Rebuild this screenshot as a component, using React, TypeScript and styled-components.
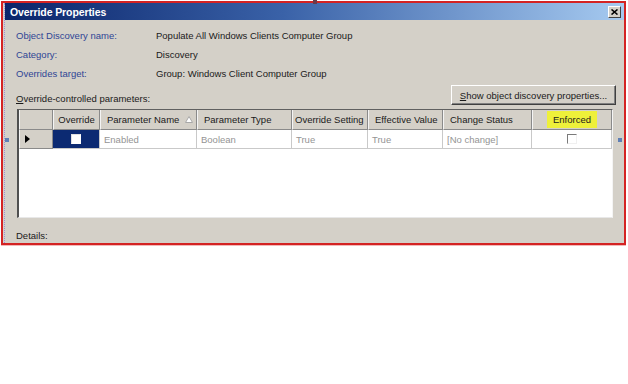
import React from "react";
import styled, { createGlobalStyle } from "styled-components";

const Global = createGlobalStyle`
  html, body { margin: 0; padding: 0; background: #ffffff; }
  body { font-family: "Liberation Sans", Arial, sans-serif; font-size: 9.5px; color: #1a1a1a; }
`;

const COLS = "34px 47px 97px 95px 76px 75px 89px 80px";

const Page = styled.div`
  padding: 1px 0 0 1px;
  width: 628px;
  height: 384px;
  box-sizing: border-box;
`;

const Frame = styled.div`
  position: relative;
  width: 625px;
  height: 244px;
  box-sizing: border-box;
  border: 2px solid #d42323;
  box-shadow: 0 1px 0 #f3b9b9;
  background: #d4d0c8;
  display: flex;
`;

const Handle = styled.span<{ $x: number; $y: number; $dark?: boolean }>`
  position: absolute;
  left: ${(p) => p.$x}px;
  top: ${(p) => p.$y}px;
  width: 4px;
  height: 4px;
  background: ${(p) => (p.$dark ? "#6a3a4a" : "#5f7fb5")};
`;

const Window = styled.div`
  flex: 1;
  margin-left: 1px;
  border-left: 1px dotted #9a8fd6;
  display: flex;
  flex-direction: column;
  min-width: 0;
`;

const TitleBar = styled.div`
  height: 17px;
  display: flex;
  align-items: center;
  justify-content: space-between;
  padding: 0 3px 0 5px;
  background: linear-gradient(90deg, #0a246a 0%, #3a62a8 45%, #a6caf0 100%);
`;

const Title = styled.span`
  color: #ffffff;
  font-weight: bold;
  font-size: 10.5px;
  letter-spacing: -0.1px;
`;

const CloseButton = styled.span`
  width: 13px;
  height: 12px;
  box-sizing: border-box;
  background: #d4d0c8;
  border-top: 1px solid #ffffff;
  border-left: 1px solid #ffffff;
  border-right: 1px solid #404040;
  border-bottom: 1px solid #404040;
  display: flex;
  align-items: center;
  justify-content: center;
`;

const Body = styled.div`
  flex: 1;
  display: flex;
  flex-direction: column;
  padding: 6px 8px 0 11px;
`;

const InfoGrid = styled.div`
  display: grid;
  grid-template-columns: 140px 1fr;
  grid-auto-rows: 19px;
  align-items: center;
`;

const Label = styled.span`
  color: #2f4595;
`;

const Value = styled.span`
  color: #1a1a1a;
`;

const ParamBar = styled.div`
  margin-top: 2px;
  height: 20px;
  display: flex;
  align-items: flex-end;
  justify-content: space-between;
`;

const SectionLabel = styled.span`
  line-height: 12px;
  color: #1a1a1a;
`;

const Button = styled.button`
  width: 165px;
  height: 20px;
  box-sizing: border-box;
  font-family: inherit;
  font-size: 9.5px;
  color: #1a1a1a;
  background: #d4d0c8;
  border-top: 1px solid #ffffff;
  border-left: 1px solid #ffffff;
  border-right: 1px solid #404040;
  border-bottom: 1px solid #404040;
  box-shadow: inset -1px -1px 0 #808080;
  padding: 0;
`;

const GridBox = styled.div`
  margin: 4px 0 0 1px;
  width: 596px;
  height: 109px;
  box-sizing: border-box;
  background: #ffffff;
  border-left: 2px solid #505050;
  border-top: 1px solid #606060;
  border-right: 1px solid #f4f4f4;
  border-bottom: 1px solid #e8e8e8;
  display: flex;
  flex-direction: column;
`;

const Row = styled.div<{ $h: number }>`
  display: grid;
  grid-template-columns: ${COLS};
  height: ${(p) => p.$h}px;
`;

const HeaderCell = styled.div<{ $center?: boolean; $pad?: number }>`
  box-sizing: border-box;
  background: #d4d0c8;
  border-left: 1px solid #f4f4f4;
  border-right: 1px solid #8a8a8a;
  border-bottom: 1px solid #8a8a8a;
  display: flex;
  align-items: center;
  justify-content: ${(p) => (p.$center ? "center" : "space-between")};
  padding: 0 ${(p) => (p.$center ? 0 : 3)}px 0 ${(p) => (p.$center ? 0 : p.$pad ?? 6)}px;
  color: #1a1a1a;
  white-space: nowrap;
  overflow: hidden;
`;

const Highlight = styled.span`
  background: #eef03a;
  padding: 3px 6px;
`;

const RowHeader = styled.div`
  box-sizing: border-box;
  background: #d4d0c8;
  border-left: 1px solid #f4f4f4;
  border-right: 1px solid #8a8a8a;
  border-bottom: 1px solid #8a8a8a;
  display: flex;
  align-items: center;
  padding-left: 5px;
`;

const DataCell = styled.div<{ $selected?: boolean; $center?: boolean }>`
  box-sizing: border-box;
  background: ${(p) => (p.$selected ? "#0c2a72" : "#ffffff")};
  border-right: 1px solid #c9c9c9;
  border-bottom: 1px solid #c9c9c9;
  display: flex;
  align-items: center;
  justify-content: ${(p) => (p.$center ? "center" : "flex-start")};
  padding-left: ${(p) => (p.$center ? 0 : 4)}px;
  color: #949494;
  white-space: nowrap;
`;

const CheckBox = styled.span<{ $filled?: boolean }>`
  width: 10px;
  height: 10px;
  box-sizing: border-box;
  background: #ffffff;
  border-top: 1px solid ${(p) => (p.$filled ? "#e0e0e0" : "#7a7a7a")};
  border-left: 1px solid ${(p) => (p.$filled ? "#e0e0e0" : "#7a7a7a")};
  border-right: 1px solid ${(p) => (p.$filled ? "#ffffff" : "#f0f0f0")};
  border-bottom: 1px solid ${(p) => (p.$filled ? "#ffffff" : "#f0f0f0")};
`;

const Empty = styled.div`
  flex: 1;
  background: #ffffff;
`;

const Details = styled.div`
  margin-top: 12px;
  line-height: 12px;
  color: #1a1a1a;
`;

const SortArrow = () => (
  <svg width="8" height="7" viewBox="0 0 8 7">
    <polygon points="4,0.5 7.5,6.5 0.5,6.5" fill="#ffffff" stroke="#a8a8a8" strokeWidth="1" />
  </svg>
);

const RowArrow = () => (
  <svg width="5" height="8" viewBox="0 0 5 8">
    <polygon points="0,0 5,4 0,8" fill="#000000" />
  </svg>
);

const CloseIcon = () => (
  <svg width="7" height="6" viewBox="0 0 7 6">
    <path d="M0.5 0.5 L6.5 5.5 M6.5 0.5 L0.5 5.5" stroke="#000" strokeWidth="1.6" />
  </svg>
);

export default function App() {
  return (
    <Page>
      <Global />
      <Frame>
        <Handle $x={2} $y={135} />
        <Handle $x={615} $y={135} />
        <Handle $x={310} $y={-3} $dark />
        <Window>
          <TitleBar>
            <Title>Override Properties</Title>
            <CloseButton>
              <CloseIcon />
            </CloseButton>
          </TitleBar>
          <Body>
            <InfoGrid>
              <Label>Object Discovery name:</Label>
              <Value>Populate All Windows Clients Computer Group</Value>
              <Label>Category:</Label>
              <Value>Discovery</Value>
              <Label>Overrides target:</Label>
              <Value>Group: Windows Client Computer Group</Value>
            </InfoGrid>
            <ParamBar>
              <SectionLabel>
                <u>O</u>verride-controlled parameters:
              </SectionLabel>
              <Button>
                <u>S</u>how object discovery properties...
              </Button>
            </ParamBar>
            <GridBox>
              <Row $h={20}>
                <HeaderCell />
                <HeaderCell $center>Override</HeaderCell>
                <HeaderCell>
                  Parameter Name
                  <SortArrow />
                </HeaderCell>
                <HeaderCell>Parameter Type</HeaderCell>
                <HeaderCell $pad={2}>Override Setting</HeaderCell>
                <HeaderCell>Effective Value</HeaderCell>
                <HeaderCell>Change Status</HeaderCell>
                <HeaderCell $center>
                  <Highlight>Enforced</Highlight>
                </HeaderCell>
              </Row>
              <Row $h={19}>
                <RowHeader>
                  <RowArrow />
                </RowHeader>
                <DataCell $selected $center>
                  <CheckBox $filled />
                </DataCell>
                <DataCell>Enabled</DataCell>
                <DataCell>Boolean</DataCell>
                <DataCell>True</DataCell>
                <DataCell>True</DataCell>
                <DataCell>[No change]</DataCell>
                <DataCell $center>
                  <CheckBox />
                </DataCell>
              </Row>
              <Empty />
            </GridBox>
            <Details>Details:</Details>
          </Body>
        </Window>
      </Frame>
    </Page>
  );
}
